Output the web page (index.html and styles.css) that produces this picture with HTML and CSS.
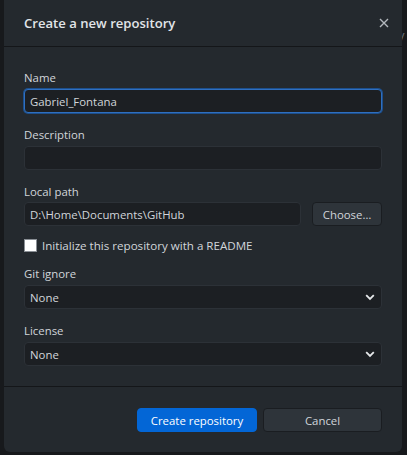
FILE: index.html
```html
<!DOCTYPE html>
<html>
<head>
<meta charset="utf-8">
<link rel="stylesheet" href="styles.css">
</head>
<body>
<div class="backdrop">
  <span class="peek">y</span>
  <div class="dialog">
    <div class="dialog-header">
      <h1 class="title">Create a new repository</h1>
      <span class="close">
        <svg width="10" height="10" viewBox="0 0 10 10"><path d="M1 1 L9 9 M9 1 L1 9" stroke="#b3b8bd" stroke-width="1.4" fill="none"/></svg>
      </span>
    </div>
    <div class="dialog-content">
      <div class="field">
        <label class="label">Name</label>
        <div class="input focused">Gabriel_Fontana</div>
      </div>
      <div class="field">
        <label class="label">Description</label>
        <div class="input"></div>
      </div>
      <div class="field">
        <label class="label">Local path</label>
        <div class="path-row">
          <div class="input grow">D:\Home\Documents\GitHub</div>
          <button class="btn secondary choose">Choose…</button>
        </div>
      </div>
      <div class="check-row">
        <span class="checkbox"></span>
        <span class="check-label">Initialize this repository with a README</span>
      </div>
      <div class="field">
        <label class="label">Git ignore</label>
        <div class="input select">None
          <svg class="chev" width="10" height="7" viewBox="0 0 10 7"><path d="M1.2 1.2 L5 5 L8.8 1.2" stroke="#e6e8ea" stroke-width="1.8" fill="none"/></svg>
        </div>
      </div>
      <div class="field">
        <label class="label">License</label>
        <div class="input select">None
          <svg class="chev" width="10" height="7" viewBox="0 0 10 7"><path d="M1.2 1.2 L5 5 L8.8 1.2" stroke="#e6e8ea" stroke-width="1.8" fill="none"/></svg>
        </div>
      </div>
    </div>
    <div class="dialog-footer">
      <button class="btn primary">Create repository</button>
      <button class="btn secondary cancel">Cancel</button>
    </div>
  </div>
</div>
</body>
</html>
```
FILE: styles.css
```css
* { box-sizing: border-box; }
html, body { margin: 0; padding: 0; }
body {
  background: #17191c;
  font-family: "Open Sans", "Noto Sans", sans-serif;
  font-size: 11.4px;
  color: #d1d5da;
  width: 407px;
  height: 455px;
  overflow: hidden;
}
.backdrop {
  position: relative;
  height: 455px;
  padding-left: 4px;
}
.peek {
  position: absolute;
  left: 398px;
  top: 26px;
  color: #6a6f75;
  font-size: 13px;
}
.dialog {
  position: relative;
  width: 398px;
  height: 452px;
  background: #24292e;
  border-radius: 0 0 6px 6px;
  display: flex;
  flex-direction: column;
}
.dialog-header {
  height: 47px;
  flex-shrink: 0;
  border-bottom: 1px solid #141619;
  display: flex;
  align-items: center;
  justify-content: space-between;
  padding: 0 12px 0 20px;
}
.title {
  margin: 0;
  font-size: 13.1px;
  font-weight: 600;
  color: #e1e4e8;
}
.close {
  display: flex;
  width: 12px;
  height: 12px;
  align-items: center;
  justify-content: center;
}
.dialog-content {
  padding: 21px 20px 20px;
  display: flex;
  flex-direction: column;
  flex-shrink: 0;
  gap: 12px;
  border-bottom: 1px solid #141619;
}
.field {
  display: flex;
  flex-direction: column;
}
.label {
  line-height: 16px;
  height: 18px;
  padding-top: 2px;
  margin-bottom: 3px;
  color: #d1d5da;
}
.input {
  height: 24px;
  background: #1c1f23;
  border: 1px solid #2c3137;
  border-radius: 4px;
  padding: 1px 5px 0;
  line-height: 22px;
  color: #d1d5da;
  position: relative;
}
.input.focused {
  border-color: #2f6fc0;
  box-shadow: 0 0 0 1px #1d4f8c;
}
.path-row {
  display: flex;
  gap: 11px;
  margin-top: -1px;
}
.grow { flex: 1; }
.btn {
  font-family: inherit;
  font-size: 11.4px;
  height: 24px;
  border-radius: 4px;
  padding: 0;
  cursor: default;
}
.secondary {
  background: #2e343a;
  border: 1px solid #1a1d21;
  color: #d1d5da;
}
.choose { width: 70px; }
.check-row {
  display: flex;
  align-items: center;
  height: 16px;
  margin-top: -1px;
  margin-bottom: -1px;
}
.checkbox {
  width: 13px;
  height: 13px;
  background: #ffffff;
  border: 1px solid #8a8f95;
  margin-right: 5px;
}
.check-label { line-height: 16px; padding-top: 1px; font-size: 11.6px; }
.select { padding-right: 20px; }
.chev {
  position: absolute;
  right: 6px;
  top: 8px;
}
.dialog-footer {
  display: flex;
  justify-content: flex-end;
  gap: 6px;
  padding: 21px 20px 0;
}
.primary {
  width: 120px;
  background: #0366d6;
  border: 1px solid #0366d6;
  color: #ffffff;
}
.cancel { width: 119px; }
```
